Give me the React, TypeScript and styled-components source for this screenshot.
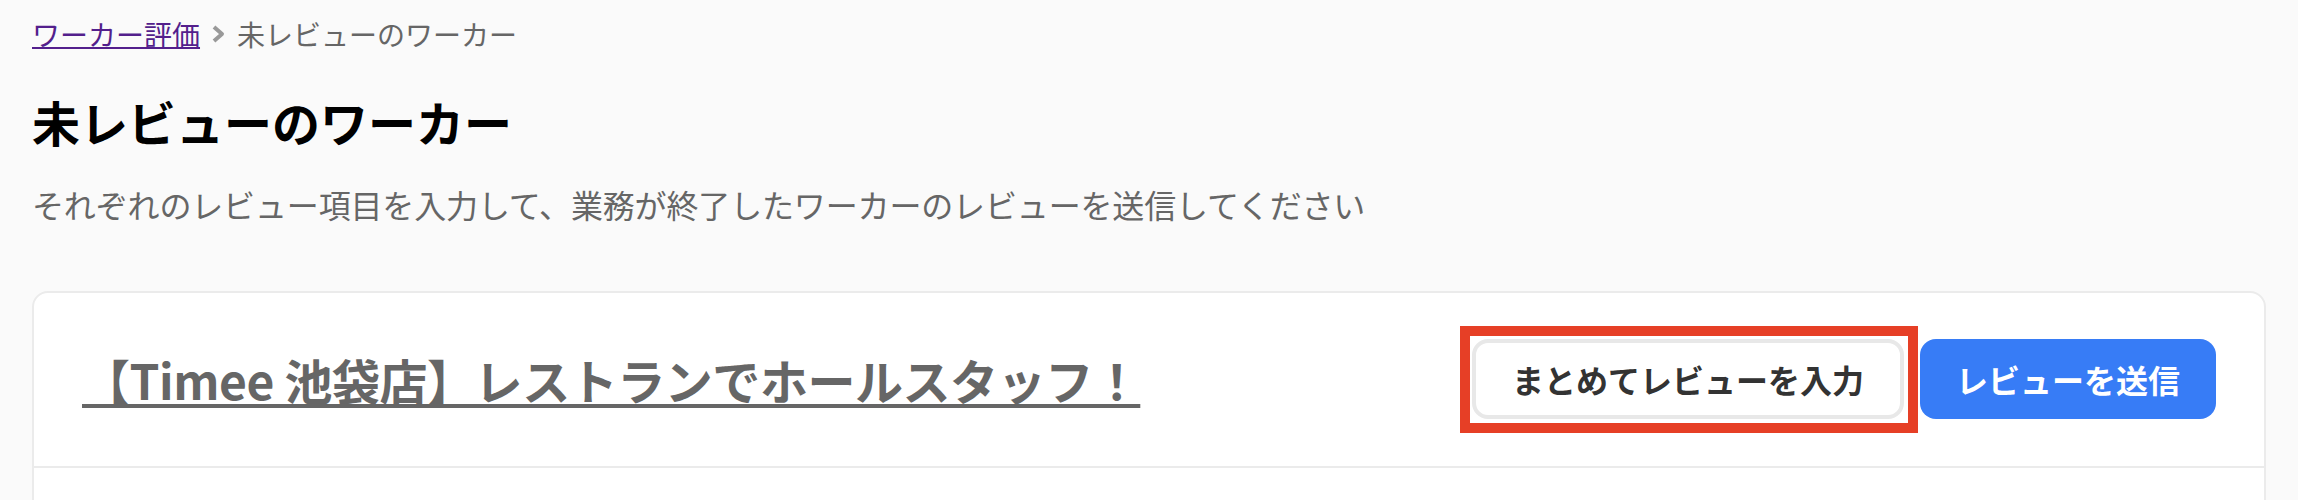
import React from 'react';
import styled, { createGlobalStyle } from 'styled-components';

const GlobalStyle = createGlobalStyle`
  body {
    margin: 0;
    background: #fafafa;
    font-family: 'Noto Sans CJK JP', 'Noto Sans', sans-serif;
  }
`;

const Page = styled.main`
  padding: 13px 32px 0;
`;

const Breadcrumb = styled.nav`
  display: flex;
  align-items: center;
  font-size: 28px;
  line-height: 42px;
`;

const CrumbLink = styled.a`
  color: #531f8c;
  text-decoration: underline;
  text-decoration-thickness: 2px;
`;

const CrumbSeparator = styled.svg`
  width: 16px;
  height: 20px;
  margin: 0 11px 0 10px;
  flex-shrink: 0;
`;

const CrumbCurrent = styled.span`
  color: #666;
`;

const Heading = styled.h1`
  margin: 30px 0 0;
  font-size: 48px;
  line-height: 72px;
  font-weight: 700;
  color: #000;
`;

const Lead = styled.p`
  margin: 23px 0 0;
  font-size: 32px;
  line-height: 48px;
  letter-spacing: -0.15px;
  color: #666;
`;

const Card = styled.section`
  margin-top: 63px;
  background: #fff;
  border: 2px solid #ebebeb;
  border-radius: 16px;
`;

const CardHeader = styled.div`
  display: flex;
  align-items: center;
  justify-content: space-between;
  padding: 46px 48px 47px;
  border-bottom: 2px solid #ebebeb;
`;

const JobTitle = styled.a`
  font-size: 48px;
  line-height: 72px;
  font-weight: 700;
  letter-spacing: -0.45px;
  color: #666;
  text-decoration: underline;
  text-decoration-thickness: 4px;
  text-underline-offset: 4px;
`;

const Actions = styled.div`
  display: flex;
  align-items: center;
  gap: 16px;
`;

const Highlight = styled.div`
  position: relative;
  display: flex;

  &::after {
    content: '';
    position: absolute;
    top: -13px;
    left: -12px;
    right: -14px;
    bottom: -14px;
    border: 10px solid #e63f26;
    pointer-events: none;
  }
`;

const Button = styled.button<{ $variant: 'outline' | 'primary' }>`
  box-sizing: border-box;
  height: 80px;
  padding: 0 36px;
  border-radius: 16px;
  font-family: inherit;
  font-size: 32px;
  font-weight: 700;
  cursor: pointer;
  border: ${(p) => (p.$variant === 'outline' ? '4px solid #e8e8e8' : 'none')};
  background: ${(p) => (p.$variant === 'outline' ? '#fff' : '#377cf6')};
  color: ${(p) => (p.$variant === 'outline' ? '#333' : '#fff')};
`;

const CardBody = styled.div`
  height: 240px;
`;

export default function App() {
  return (
    <>
      <GlobalStyle />
      <Page>
        <Breadcrumb>
          <CrumbLink href="#">ワーカー評価</CrumbLink>
          <CrumbSeparator viewBox="0 0 16 20">
            <path d="M4 3 L12 10 L4 17" fill="none" stroke="#999" strokeWidth="4" strokeLinejoin="round" />
          </CrumbSeparator>
          <CrumbCurrent>未レビューのワーカー</CrumbCurrent>
        </Breadcrumb>
        <Heading>未レビューのワーカー</Heading>
        <Lead>それぞれのレビュー項目を入力して、業務が終了したワーカーのレビューを送信してください</Lead>
        <Card>
          <CardHeader>
            <JobTitle href="#">【Timee 池袋店】レストランでホールスタッフ！</JobTitle>
            <Actions>
              <Highlight>
                <Button $variant="outline">まとめてレビューを入力</Button>
              </Highlight>
              <Button $variant="primary">レビューを送信</Button>
            </Actions>
          </CardHeader>
          <CardBody />
        </Card>
      </Page>
    </>
  );
}
